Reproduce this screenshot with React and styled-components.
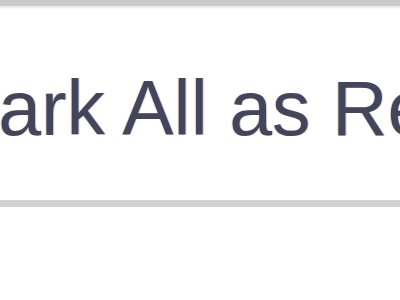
import styled, { createGlobalStyle } from "styled-components";

const GlobalStyle = createGlobalStyle`
  html, body {
    margin: 0;
    padding: 0;
    background: #fff;
    overflow: hidden;
  }
  body {
    font-family: "Liberation Sans", Arial, sans-serif;
  }
`;

// the screenshot is an enlarged crop, so the whole strip is a bit soft
const Page = styled.div`
  width: 440px;
  height: 320px;
  margin: -10px 0 0 -20px;
  overflow: hidden;
  filter: blur(0.7px);
`;

const ActionBar = styled.div`
  display: flex;
  align-items: flex-start;
  border-top: 16px solid #cacaca;
  border-bottom: 7px solid #d2d2d2;
  box-shadow: inset 0 2px 3px #e6e6e6;
  padding: 58px 0 47px;
  background: #fff;
`;

const MarkButton = styled.button`
  flex: none;
  margin-left: -46px;
  padding: 0;
  border: 0;
  background: transparent;
  font-family: "Liberation Sans", Arial, sans-serif;
  font-size: 77px;
  line-height: normal;
  color: #43465a;
  text-shadow: -1px 0 rgba(235, 160, 70, 0.35), 1px 0 rgba(70, 110, 220, 0.3);
  white-space: nowrap;
  cursor: pointer;
`;

export default function App() {
  return (
    <>
      <GlobalStyle />
      <Page>
        <ActionBar>
          <MarkButton type="button">Mark All as Read</MarkButton>
        </ActionBar>
      </Page>
    </>
  );
}
